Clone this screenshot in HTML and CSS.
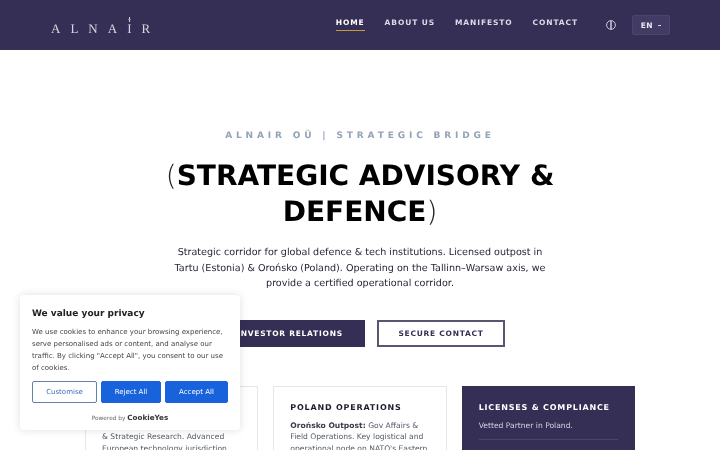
FILE: index.html
```html
<!DOCTYPE html>
<html lang="en">
<head>
    <meta charset="UTF-8">
    <meta name="viewport" content="width=device-width, initial-scale=1.0">
    <title>Alnair OÜ</title>
    <link rel="stylesheet" href="styles.css">
</head>
<body>
    <header class="site-header">
        <a href="#" class="logo">
            <span>A</span><span>L</span><span>N</span><span>A</span><span class="logo-i">I</span><span>R</span>
        </a>
        <nav class="main-nav">
            <a href="#" class="nav-link active">HOME</a>
            <a href="#" class="nav-link">ABOUT US</a>
            <a href="#" class="nav-link">MANIFESTO</a>
            <a href="#" class="nav-link">CONTACT</a>
        </nav>
        <button class="theme-toggle" aria-label="Toggle theme">
            <svg width="10" height="10" viewBox="0 0 10 10" fill="none" stroke="currentColor">
                <circle cx="5" cy="5" r="4.4" stroke-width="0.9"/>
                <path d="M5 1v8" stroke-width="1.4"/>
            </svg>
        </button>
        <button class="lang-btn">EN <span class="lang-caret"></span></button>
    </header>

    <main class="hero">
        <p class="eyebrow">ALNAIR OÜ | STRATEGIC BRIDGE</p>
        <h1 class="hero-title"><span class="paren">(</span>STRATEGIC ADVISORY &amp; DEFENCE<span class="paren">)</span></h1>
        <p class="hero-text">Strategic corridor for global defence &amp; tech institutions. Licensed outpost in Tartu (Estonia) &amp; Orońsko (Poland). Operating on the Tallinn–Warsaw axis, we provide a certified operational corridor.</p>
        <div class="hero-buttons">
            <a href="#" class="btn btn-solid">INVESTOR RELATIONS</a>
            <a href="#" class="btn btn-outline">SECURE CONTACT</a>
        </div>

        <section class="cards">
            <div class="card">
                <h3>ESTONIA HQ</h3>
                <p><strong>Tartu Office:</strong> Corporate HQ<br>&amp; Strategic Research. Advanced European technology jurisdiction and digital governance.</p>
            </div>
            <div class="card">
                <h3>POLAND OPERATIONS</h3>
                <p><strong>Orońsko Outpost:</strong> Gov Affairs &amp; Field Operations. Key logistical and operational node on NATO's Eastern Flank.</p>
            </div>
            <div class="card card-dark">
                <h3>LICENSES &amp; COMPLIANCE</h3>
                <p>Vetted Partner in Poland.</p>
                <hr class="card-rule">
            </div>
        </section>
    </main>

    <aside class="cookie-box">
        <h4>We value your privacy</h4>
        <p>We use cookies to enhance your browsing experience, serve personalised ads or content, and analyse our traffic. By clicking "Accept All", you consent to our use of cookies.</p>
        <div class="cookie-buttons">
            <button class="cookie-btn cookie-customise">Customise</button>
            <button class="cookie-btn cookie-reject">Reject All</button>
            <button class="cookie-btn cookie-accept">Accept All</button>
        </div>
        <div class="cookie-powered">Powered by <b>CookieYes</b></div>
    </aside>
</body>
</html>
```

FILE: styles.css
```css
* {
    margin: 0;
    padding: 0;
    box-sizing: border-box;
}

html, body {
    height: 450px;
    overflow: hidden;
}

body {
    font-family: "DejaVu Sans", sans-serif;
    background: #fff;
    color: #2d2d3f;
    text-rendering: geometricPrecision;
}

a {
    text-decoration: none;
}

button {
    font-family: inherit;
    text-rendering: inherit;
    cursor: pointer;
}

.site-header, .hero, .cookie-box {
    will-change: transform;
}

.site-header {
    height: 50px;
    background: #352f56;
    display: flex;
    align-items: center;
    padding: 0 50px 0 51px;
}

.logo {
    display: flex;
    gap: 10px;
    font-family: "Liberation Serif", serif;
    font-size: 13px;
    color: #d8d6e2;
    margin-top: 7px;
    margin-right: auto;
}

.logo-i {
    position: relative;
}

.logo-i::before {
    content: "";
    position: absolute;
    left: 1.5px;
    top: -4px;
    width: 1px;
    height: 5px;
    background: #d8d6e2;
}

.logo-i::after {
    content: "";
    position: absolute;
    left: 0.5px;
    top: -2px;
    width: 3px;
    height: 1px;
    background: #8f8ba6;
}

.main-nav {
    display: flex;
    gap: 20px;
    margin-top: -5px;
}

.nav-link {
    font-size: 7.5px;
    font-weight: 700;
    letter-spacing: 0.9px;
    color: #dcdae8;
    padding: 3px 0 3px;
    border-bottom: 1px solid transparent;
}

.nav-link.active {
    color: #fff;
    border-bottom-color: #c79a3a;
}

.theme-toggle {
    background: none;
    border: none;
    color: #dcdae8;
    display: flex;
    margin-left: 28px;
    margin-right: 16px;
}

.lang-btn {
    width: 38px;
    height: 20px;
    background: #423c64;
    border: 1px solid #4a4570;
    border-radius: 2px;
    color: #e8e6f0;
    font-size: 7.5px;
    font-weight: 700;
    letter-spacing: 0.5px;
}

.lang-caret {
    display: inline-block;
    width: 3px;
    height: 1px;
    background: #dcdae8;
    margin-left: 2px;
    vertical-align: 2px;
}

.hero {
    text-align: center;
    padding-top: 80px;
}

.eyebrow {
    font-size: 9px;
    font-weight: 700;
    letter-spacing: 3.85px;
    color: #94a3b8;
    line-height: 12px;
}

.hero-title {
    width: 420px;
    margin: 16px auto 0;
    font-size: 28px;
    line-height: 36px;
    font-weight: 700;
    color: #000;
}

.paren {
    font-weight: 200;
    color: #222;
}

.hero-text {
    width: 380px;
    margin: 15px auto 0;
    font-size: 9.6px;
    line-height: 15.5px;
    color: #26263a;
}

.hero-buttons {
    display: flex;
    justify-content: center;
    gap: 12px;
    margin-top: 28px;
}

.btn {
    height: 27px;
    line-height: 27px;
    font-size: 7.5px;
    font-weight: 700;
    letter-spacing: 0.75px;
}

.btn-solid {
    width: 150px;
    background: #352f56;
    color: #fff;
}

.btn-outline {
    width: 128px;
    line-height: 23px;
    border: 2px solid #5a5670;
    color: #352f56;
    background: #fff;
}

.cards {
    width: 550px;
    margin: 39px auto 0;
    display: grid;
    grid-template-columns: repeat(3, 1fr);
    gap: 15px;
    text-align: left;
}

.card {
    height: 140px;
    border: 1px solid #e6e6ea;
    padding: 15px 16px;
}

.card h3 {
    font-size: 8px;
    font-weight: 700;
    letter-spacing: 0.8px;
    color: #1c1c2e;
    line-height: 12px;
    margin-bottom: 6px;
}

.card p {
    font-size: 7.6px;
    line-height: 11.7px;
    color: #55596a;
}

.card p strong {
    color: #3a3a4c;
}

.card-dark {
    background: #352f56;
    border-color: #352f56;
}

.card-dark h3 {
    color: #fff;
}

.card-dark p {
    color: #d5d3e0;
}

.card-rule {
    border: none;
    border-top: 1px solid #4a4570;
    margin-top: 8px;
}

.cookie-box {
    position: fixed;
    left: 20px;
    top: 295px;
    width: 220px;
    height: 135px;
    background: #fff;
    border-radius: 4px;
    box-shadow: 0 0 9px rgba(0, 0, 0, 0.13);
    padding: 12px;
}

.cookie-box h4 {
    font-size: 9px;
    font-weight: 700;
    color: #212121;
    line-height: 12px;
    margin-top: 1px;
    margin-bottom: 7px;
}

.cookie-box p {
    font-size: 7px;
    line-height: 11.9px;
    color: #444;
}

.cookie-buttons {
    display: flex;
    gap: 4px;
    margin-top: 6px;
}

.cookie-btn {
    height: 22px;
    font-size: 7px;
    border-radius: 2px;
    border: 1px solid #1863dc;
    background: #1863dc;
    color: #fff;
}

.cookie-customise {
    width: 65px;
    background: #fff;
    color: #3f6db8;
    border-color: #5f83ab;
}

.cookie-reject {
    width: 60px;
}

.cookie-accept {
    width: 63px;
}

.cookie-powered {
    margin-top: 10px;
    text-align: center;
    font-size: 5.8px;
    color: #666;
}

.cookie-powered b {
    font-size: 7.2px;
    color: #333;
}
```
